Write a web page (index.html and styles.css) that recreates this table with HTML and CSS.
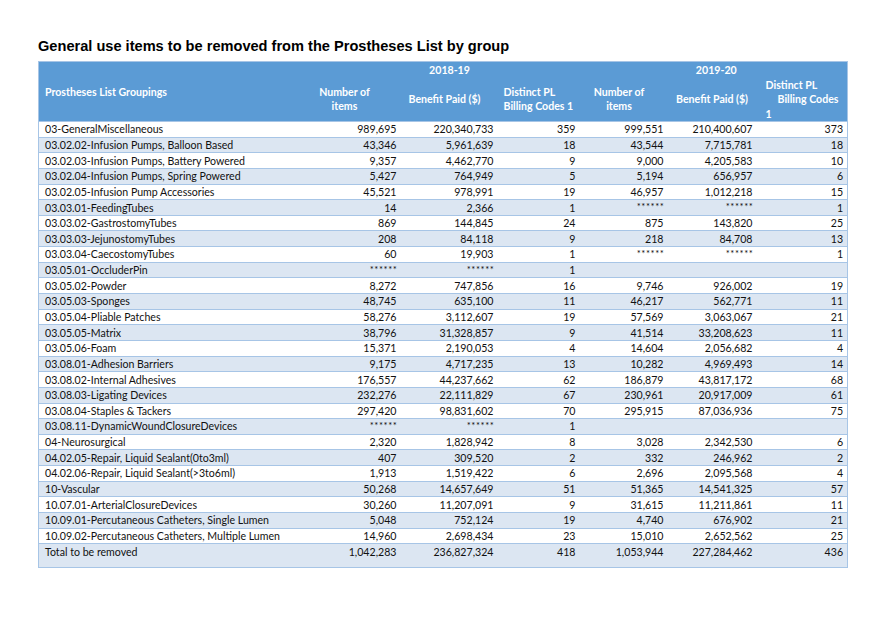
FILE: index.html
```html
<!DOCTYPE html>
<html>
<head>
<meta charset="utf-8">
<link rel="stylesheet" href="styles.css">
</head>
<body>
<div class="page">
  <h1 class="title">General use items to be removed from the Prostheses List by group</h1>
  <table class="tbl">
    <colgroup>
      <col class="c1"><col class="c2"><col class="c3"><col class="c4"><col class="c5"><col class="c6"><col class="c7">
    </colgroup>
    <thead>
      <tr class="yr">
        <th rowspan="2" class="h-group">Prostheses List Groupings</th>
        <th colspan="3" class="y1">2018-19</th>
        <th colspan="3" class="y2">2019-20</th>
      </tr>
      <tr class="lbl">
        <th class="h2">Number of<br>items</th>
        <th class="h3">Benefit Paid ($)</th>
        <th class="h4">Distinct PL<br>Billing Codes 1</th>
        <th class="h5">Number of<br>items</th>
        <th class="h6">Benefit Paid ($)</th>
        <th class="h7">Distinct PL<br><span class="ind">Billing Codes</span><br>1</th>
      </tr>
    </thead>
    <tbody>
      <tr><td>03-GeneralMiscellaneous</td><td>989,695</td><td>220,340,733</td><td>359</td><td>999,551</td><td>210,400,607</td><td>373</td></tr>
      <tr><td>03.02.02-Infusion Pumps, Balloon Based</td><td>43,346</td><td>5,961,639</td><td>18</td><td>43,544</td><td>7,715,781</td><td>18</td></tr>
      <tr><td>03.02.03-Infusion Pumps, Battery Powered</td><td>9,357</td><td>4,462,770</td><td>9</td><td>9,000</td><td>4,205,583</td><td>10</td></tr>
      <tr><td>03.02.04-Infusion Pumps, Spring Powered</td><td>5,427</td><td>764,949</td><td>5</td><td>5,194</td><td>656,957</td><td>6</td></tr>
      <tr><td>03.02.05-Infusion Pump Accessories</td><td>45,521</td><td>978,991</td><td>19</td><td>46,957</td><td>1,012,218</td><td>15</td></tr>
      <tr><td>03.03.01-FeedingTubes</td><td>14</td><td>2,366</td><td>1</td><td class="ast">******</td><td class="ast">******</td><td>1</td></tr>
      <tr><td>03.03.02-GastrostomyTubes</td><td>869</td><td>144,845</td><td>24</td><td>875</td><td>143,820</td><td>25</td></tr>
      <tr><td>03.03.03-JejunostomyTubes</td><td>208</td><td>84,118</td><td>9</td><td>218</td><td>84,708</td><td>13</td></tr>
      <tr><td>03.03.04-CaecostomyTubes</td><td>60</td><td>19,903</td><td>1</td><td class="ast">******</td><td class="ast">******</td><td>1</td></tr>
      <tr><td>03.05.01-OccluderPin</td><td class="ast">******</td><td class="ast">******</td><td>1</td><td></td><td></td><td></td></tr>
      <tr><td>03.05.02-Powder</td><td>8,272</td><td>747,856</td><td>16</td><td>9,746</td><td>926,002</td><td>19</td></tr>
      <tr><td>03.05.03-Sponges</td><td>48,745</td><td>635,100</td><td>11</td><td>46,217</td><td>562,771</td><td>11</td></tr>
      <tr><td>03.05.04-Pliable Patches</td><td>58,276</td><td>3,112,607</td><td>19</td><td>57,569</td><td>3,063,067</td><td>21</td></tr>
      <tr><td>03.05.05-Matrix</td><td>38,796</td><td>31,328,857</td><td>9</td><td>41,514</td><td>33,208,623</td><td>11</td></tr>
      <tr><td>03.05.06-Foam</td><td>15,371</td><td>2,190,053</td><td>4</td><td>14,604</td><td>2,056,682</td><td>4</td></tr>
      <tr><td>03.08.01-Adhesion Barriers</td><td>9,175</td><td>4,717,235</td><td>13</td><td>10,282</td><td>4,969,493</td><td>14</td></tr>
      <tr><td>03.08.02-Internal Adhesives</td><td>176,557</td><td>44,237,662</td><td>62</td><td>186,879</td><td>43,817,172</td><td>68</td></tr>
      <tr><td>03.08.03-Ligating Devices</td><td>232,276</td><td>22,111,829</td><td>67</td><td>230,961</td><td>20,917,009</td><td>61</td></tr>
      <tr><td>03.08.04-Staples &amp; Tackers</td><td>297,420</td><td>98,831,602</td><td>70</td><td>295,915</td><td>87,036,936</td><td>75</td></tr>
      <tr><td>03.08.11-DynamicWoundClosureDevices</td><td class="ast">******</td><td class="ast">******</td><td>1</td><td></td><td></td><td></td></tr>
      <tr><td>04-Neurosurgical</td><td>2,320</td><td>1,828,942</td><td>8</td><td>3,028</td><td>2,342,530</td><td>6</td></tr>
      <tr><td>04.02.05-Repair, Liquid Sealant(0to3ml)</td><td>407</td><td>309,520</td><td>2</td><td>332</td><td>246,962</td><td>2</td></tr>
      <tr><td>04.02.06-Repair, Liquid Sealant(&gt;3to6ml)</td><td>1,913</td><td>1,519,422</td><td>6</td><td>2,696</td><td>2,095,568</td><td>4</td></tr>
      <tr><td>10-Vascular</td><td>50,268</td><td>14,657,649</td><td>51</td><td>51,365</td><td>14,541,325</td><td>57</td></tr>
      <tr><td>10.07.01-ArterialClosureDevices</td><td>30,260</td><td>11,207,091</td><td>9</td><td>31,615</td><td>11,211,861</td><td>11</td></tr>
      <tr><td>10.09.01-Percutaneous Catheters, Single Lumen</td><td>5,048</td><td>752,124</td><td>19</td><td>4,740</td><td>676,902</td><td>21</td></tr>
      <tr><td>10.09.02-Percutaneous Catheters, Multiple Lumen</td><td>14,960</td><td>2,698,434</td><td>23</td><td>15,010</td><td>2,652,562</td><td>25</td></tr>
      <tr class="total"><td>Total to be removed</td><td>1,042,283</td><td>236,827,324</td><td>418</td><td>1,053,944</td><td>227,284,462</td><td>436</td></tr>
    </tbody>
  </table>
</div>
</body>
</html>
```

FILE: styles.css
```css
html, body {
  margin: 0;
  padding: 0;
  background: #ffffff;
}

.page {
  padding: 38px 0 0 38px;
}

.title {
  margin: 0 0 6px 0;
  font-family: "Liberation Sans", Arial, sans-serif;
  font-weight: bold;
  font-size: 14.6px;
  line-height: 17px;
  color: #000;
}

.tbl {
  width: 809px;
  table-layout: fixed;
  border-collapse: collapse;
  font-family: Lato, "Open Sans", sans-serif;
  font-size: 10.6px;
  color: #111;
  border: 1px solid #a7c5e6;
}

.c1 { width: 262px; }
.c2 { width: 100px; }
.c3 { width: 97px; }
.c4 { width: 82px; }
.c5 { width: 88px; }
.c6 { width: 89px; }
.c7 { width: 91px; }

thead th {
  background: #5b9bd5;
  color: #ffffff;
  font-weight: bold;
  padding: 0;
  line-height: 14.5px;
  vertical-align: middle;
  white-space: nowrap;
}

.yr { height: 16px; }
.lbl { height: 41px; }

.h-group {
  text-align: left;
  padding-left: 6px;
  padding-top: 1px;
}

.y1 { text-align: center; padding-left: 19px; }
.y2 { text-align: center; padding-left: 6px; }

.h2 { text-align: center; padding-right: 12px; }
.h3 { text-align: right; padding-right: 17px; }
.h4 { text-align: left; padding-left: 6px; }
.h5 { text-align: center; padding-right: 9px; }
.h6 { text-align: center; }
.h7 { text-align: left; padding-left: 9px; }
.ind { padding-left: 12px; }

tbody tr { height: 15.65px; }

tbody td {
  padding: 0 4px 0 0;
  text-align: right;
  line-height: 12px;
  white-space: nowrap;
  border-top: 1px solid #a7c5e6;
  vertical-align: middle;
}

tbody td:first-child {
  text-align: left;
  padding-left: 6px;
}

tbody tr:nth-child(even) td {
  background: #dce6f2;
}

tbody td.ast {
  font-size: 9.5px;
  letter-spacing: 0.6px;
  padding-right: 3px;
  vertical-align: top;
  padding-top: 1px;
}

tbody tr.total { height: 24px; }
tbody tr.total td {
  vertical-align: top;
  padding-top: 2px;
}
```
